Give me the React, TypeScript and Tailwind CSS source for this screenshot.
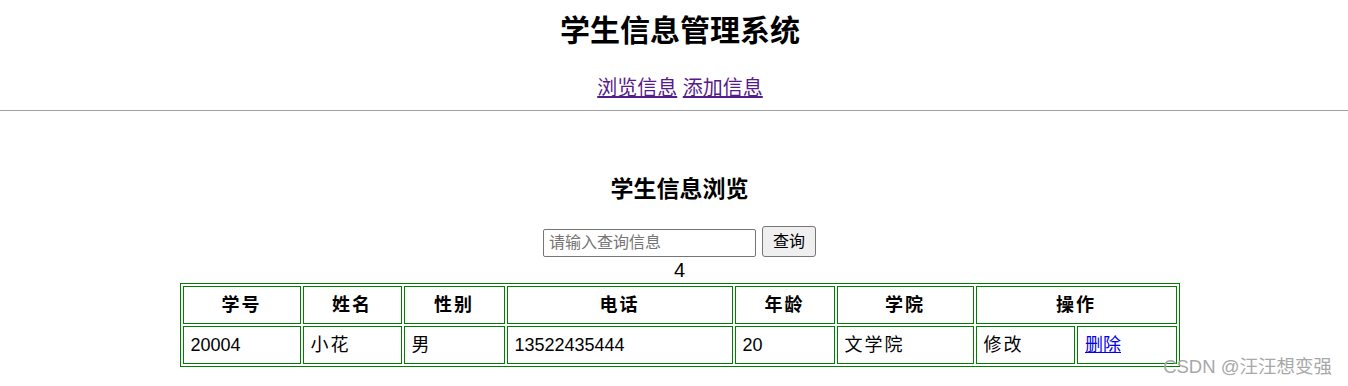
import React from "react";

const cols = [
  { label: "学号", w: "w-[118px]" },
  { label: "姓名", w: "w-[99px]" },
  { label: "性别", w: "w-[101px]" },
  { label: "电话", w: "w-[226px]" },
  { label: "年龄", w: "w-[100px]" },
  { label: "学院", w: "w-[137px]" },
];

const student = ["20004", "小花", "男", "13522435444", "20", "文学院"];

export default function App() {
  return (
    <div className="relative min-h-[386px] bg-white text-black font-['Liberation_Sans','Noto_Sans_CJK_SC',sans-serif]">
      <div className="pl-[12px]">
        <h1 className="pt-[12px] text-center text-[30px] font-bold leading-[38px]">
          学生信息管理系统
        </h1>
      </div>
      <nav className="mt-[24px] pl-[12px] text-center text-[20px] leading-[28px]">
        <a href="#" className="text-[#551a8b] underline">浏览信息</a>{" "}
        <a href="#" className="text-[#551a8b] underline">添加信息</a>
      </nav>
      <hr className="mt-[8px] border-0 border-t border-[#a0a0a0]" />

      <div className="pl-[11px]">
        <h2 className="mt-[62px] text-center text-[23px] font-bold leading-[32px]">
          学生信息浏览
        </h2>

        <div className="mt-[21px] flex items-end justify-center gap-[6px]">
          <input
            type="text"
            placeholder="请输入查询信息"
            className="h-[28px] w-[213px] rounded-[2px] border border-[#767676] px-[5px] text-[16px] placeholder:text-[#757575] focus:outline-none"
          />
          <button className="h-[31px] w-[54px] rounded-[3px] border border-[#767676] bg-[#efefef] text-[16px] leading-none">
            查询
          </button>
        </div>
        <div className="text-center text-[20px] leading-[26px]">4</div>

        <table className="mx-auto w-[1000px] table-fixed border-separate border-spacing-[2px] border border-[#008000] text-[18px] leading-[22px]">
          <thead>
            <tr className="h-[38px]">
              {cols.map((c) => (
                <th key={c.label} className={`${c.w} border border-[#008000] text-center font-bold tracking-[2px]`}>
                  {c.label}
                </th>
              ))}
              <th colSpan={2} className="border border-[#008000] text-center font-bold tracking-[2px]">
                操作
              </th>
            </tr>
          </thead>
          <tbody>
            <tr className="h-[38px]">
              {student.map((v, i) => (
                <td key={i} className="border border-[#008000] px-[7px] tracking-[2px] first:tracking-normal [&:nth-child(4)]:tracking-normal [&:nth-child(5)]:tracking-normal">
                  {v}
                </td>
              ))}
              <td className="w-[99px] border border-[#008000] px-[7px] tracking-[2px]">修改</td>
              <td className="w-[100px] border border-[#008000] px-[7px]">
                <a href="#" className="text-[#0000ee] underline">删除</a>
              </td>
            </tr>
          </tbody>
        </table>
      </div>

      <div className="absolute right-[16px] top-[357px] text-[18.5px] leading-[20px] text-[#a8a8a8]">
        CSDN @汪汪想变强
      </div>
    </div>
  );
}
